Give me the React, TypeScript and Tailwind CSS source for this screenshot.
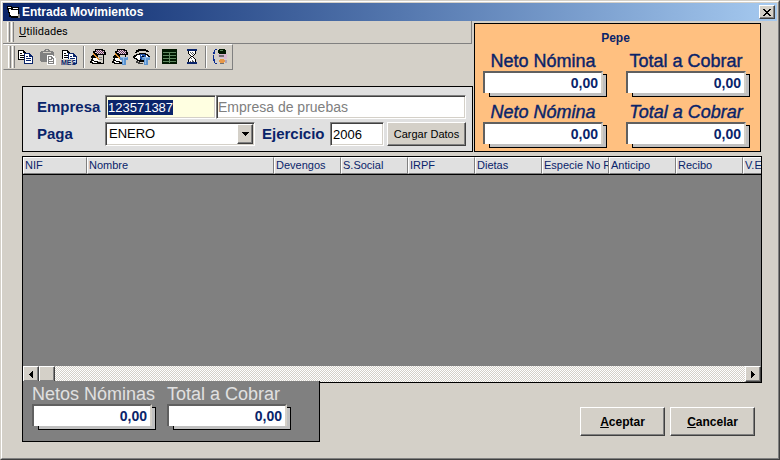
import React, { useEffect, useRef, useState } from 'react';

const raised =
  'bg-[#d4d0c8] border border-t-white border-l-white border-r-[#404040] border-b-[#404040] shadow-[inset_-1px_-1px_0_#808080]';
const sunken =
  'border border-t-[#808080] border-l-[#808080] border-r-white border-b-white shadow-[inset_1px_1px_0_#404040,inset_-1px_-1px_0_#d4d0c8]';

const columns = [
  { label: 'NIF', width: 'w-[64px]' },
  { label: 'Nombre', width: 'w-[187px]' },
  { label: 'Devengos', width: 'w-[67px]' },
  { label: 'S.Social', width: 'w-[67px]' },
  { label: 'IRPF', width: 'w-[67px]' },
  { label: 'Dietas', width: 'w-[67px]' },
  { label: 'Especie No R', width: 'w-[67px]' },
  { label: 'Anticipo', width: 'w-[67px]' },
  { label: 'Recibo', width: 'w-[67px]' },
  { label: 'V.E', width: 'w-[67px]' },
];

const Icon: React.FC<{ children: React.ReactNode }> = ({ children }) => (
  <svg width="18" height="16" viewBox="0 0 18 16" shapeRendering="crispEdges" aria-hidden="true">
    {children}
  </svg>
);

const Pages: React.FC = () => (
  <>
    <path fill="#000" d="M1 1h6v1h1v1h1v8H1z" />
    <path fill="#fff" d="M2 2h4v2h2v6H2z" />
    <path fill="#000" d="M3 4h2v1H3zM3 6h4v1H3zM3 8h4v1H3z" />
    <path fill="#0a246a" d="M7 4h6v1h1v1h1v1h1v8H7z" />
    <path fill="#fff" d="M8 5h4v3h3v6H8z" />
    <path fill="#0a246a" d="M9 7h2v1H9zM9 9h5v1H9zM9 11h5v1H9zM12 5h1v2h2v1h-3z" />
  </>
);

const CopyIcon = () => (
  <Icon>
    <Pages />
  </Icon>
);

const PasteIcon = () => (
  <Icon>
    <path fill="#808080" d="M6 0h4v1h1v1h3v1h1v10H2v-1H1V3h1V2h3V1h1z" />
    <path fill="#d4d0c8" d="M7 1h2v1H7zM4 3h8v1H4z" />
    <path fill="#fff" d="M8 6h6v1h2v2h1v7H8z" />
    <path fill="#808080" d="M9 7h4v1h1v1h1v6H9z" />
    <path fill="#fff" d="M10 8h2v2h2v4h-4z" />
    <path fill="#808080" d="M10 10h3v1h-3zM10 12h4v1h-4z" />
  </Icon>
);

const CopyMonthIcon = () => (
  <Icon>
    <Pages />
    <path fill="#d4d0c8" d="M0 10h12v6H0z" />
    <text x="0" y="16" fontSize="7" fontWeight="700" fill="#0a246a" fontFamily="Liberation Sans, sans-serif">
      MES
    </text>
  </Icon>
);

const Book: React.FC = () => (
  <>
    <path fill="#000" d="M6 0h8v1h2v2h1v3h-2v9H3v-1H1v-2h1v-2h1V9H2V7h1V6h2V5H4V2h2z" />
    <path fill="#e8c8dc" d="M7 1h6v1h2v3H8V4H6V3h1z" />
    <path
      fill="#604058"
      d="M8 1h1v1H8zM10 1h1v1h-1zM12 1h1v1h-1zM7 2h1v1H7zM9 2h1v1H9zM11 2h1v1h-1zM13 2h1v1h-1zM8 3h1v1H8zM10 3h1v1h-1zM12 3h1v1h-1zM14 3h1v1h-1zM9 4h1v1H9zM11 4h1v1h-1zM13 4h1v1h-1z"
    />
    <path fill="#d4d0c8" d="M9 6h5v8H9z" />
    <path fill="#808080" d="M10 8h3v1h-3zM10 10h3v1h-3z" />
    <path fill="#fff" d="M4 9h4v1h2v2H8v2H4v-1H3v-1h2v-1H4zM6 6h1v2H6z" />
    <path fill="#e09030" d="M4 4h1v1h1v1h1v1h1v1h1v1h1v2H9v-1H8V9H7V8H6V7H5V6H4z" />
    <path fill="#000" d="M5 12h3v1H5zM8 13h4v1H8z" />
  </>
);

const Filter: React.FC = () => (
  <>
    <path fill="#5c94d0" d="M9 8h8v3h-2v5h-4v-5H9z" />
    <path fill="#90bcec" d="M10 8h6v1h-6zM12 9h1v6h-1z" />
  </>
);

const BookIcon = () => (
  <Icon>
    <Book />
  </Icon>
);

const BookFilterIcon = () => (
  <Icon>
    <Book />
    <Filter />
  </Icon>
);

const EyeFilterIcon = () => (
  <Icon>
    <path fill="#000" d="M5 0h8v1h2v1h1v1h-3V2H6v1H4v1H2V3h1V1h2z" />
    <path fill="#000" d="M6 4h7v1h2v1h1v1h1v2h-2v2h-2v1h-2v1H6v-1H4v-1H3v-1H1V9H0V7h1V6h2V5h3z" />
    <path fill="#fff" d="M4 6h3v5H5v-1H4V9H2V8h1V7h1zM13 6h1v1h1v2h-1v1h-1z" />
    <path fill="#1c4ca0" d="M7 5h5v1h1v4h-1v1H8v-1H7z" />
    <path fill="#000" d="M9 7h2v2H9z" />
    <path fill="#fff" d="M8 6h1v1H8z" />
    <path fill="#404040" d="M3 12h2v1h2v1h3v1H5v-1H3z" />
    <Filter />
  </Icon>
);

const SheetIcon = () => (
  <Icon>
    <path fill="#001800" d="M1 0h15v15H1z" />
    <path fill="#608860" d="M2 3h13v1H2zM2 6h6v1H2zM9 6h6v1H9zM2 9h6v1H2zM9 9h6v1H9zM2 12h6v1H2zM9 12h6v1H9zM8 4h1v10H8z" />
  </Icon>
);

const HourglassIcon = () => (
  <Icon>
    <path fill="#0a246a" d="M4 0h10v2H4zM4 13h10v2H4z" />
    <path fill="#000" d="M5 2h8v3h-1v1h-1v1h-1v1h1v1h1v1h1v3H5v-3h1V9h1V8h1V7H7V6H6V5H5z" />
    <path fill="#fff" d="M6 2h6v3h-1v1h-1v1H8V6H7V5H6zM8 8h2v1h1v1h1v3H6v-3h1V9h1z" />
    <path fill="#606060" d="M7 3h1v1H7zM9 3h1v1H9zM8 4h1v1H8zM10 4h1v1h-1zM9 5h1v1H9zM8 9h1v1H8zM9 11h1v1H9zM7 12h1v1H7zM9 12h2v1H9z" />
  </Icon>
);

const OptionsIcon = () => (
  <Icon>
    <path fill="#0a2a90" d="M4 0h2v1H4zM3 1h1v2H3zM2 3h2v2H2zM2 6h1v4H2zM2 10h2v2H2zM3 12h1v2H3zM4 14h2v1H4z" />
    <path fill="#001800" d="M8 0h6v1h1v4H8V4H7V1h1z" />
    <path fill="#608860" d="M9 1h3v1H9z" />
    <path fill="#d8b8d0" d="M7 5h9v5h-3v-1H9V8H7z" />
    <path fill="#707070" d="M8 6h5v2H8zM9 14h4v1H9z" />
    <path fill="#e89848" d="M9 10h4v1h1v2h-1v1H9v-1H8v-2h1z" />
    <path fill="#b0a8b8" d="M14 11h2v3h-2z" />
  </Icon>
);

const ToolButton: React.FC<{ label: string; children: React.ReactNode }> = ({ label, children }) => (
  <button type="button" aria-label={label} className="flex h-[22px] w-[22px] items-center justify-center">
    {children}
  </button>
);

const Separator = () => <span className="mx-[2px] h-[22px] w-[2px] border-l border-l-[#808080] bg-white" />;

const Grip = () => (
  <span className="ml-[4px] flex gap-px self-stretch py-px">
    <span className="w-[3px] border-r border-l border-r-[#808080] border-l-white" />
    <span className="w-[3px] border-r border-l border-r-[#808080] border-l-white" />
  </span>
);

interface AmountProps {
  id: string;
  label: string;
  labelClass?: string;
}

const Amount: React.FC<AmountProps> = ({ id, label, labelClass = '' }) => (
  <div className="w-[120px]">
    <label htmlFor={id} className={`block text-[18px] leading-[20px] whitespace-nowrap ${labelClass}`}>
      {label}
    </label>
    <div className="relative h-[22px]">
      <span className="absolute top-[3px] -right-[4px] -bottom-[4px] left-[6px] border border-black bg-[#c0c0c0]" />
      <input
        id={id}
        readOnly
        defaultValue="0,00"
        className="relative block h-[22px] w-full border-t-2 border-r-2 border-l-2 border-t-[#606060] border-r-[#d4d0c8] border-l-[#606060] bg-white pr-[3px] pb-px text-right text-[14px] font-bold text-[#0a246a] outline-none"
      />
    </div>
  </div>
);

const App: React.FC = () => {
  const [paga, setPaga] = useState('ENERO');
  const empresaRef = useRef<HTMLInputElement>(null);

  useEffect(() => {
    empresaRef.current?.focus();
    empresaRef.current?.select();
  }, []);

  return (
    <div className="flex min-h-screen flex-col border border-t-[#d4d0c8] border-r-[#404040] border-b-[#404040] border-l-[#d4d0c8] bg-[#d4d0c8] font-['Liberation_Sans',Arial,sans-serif] text-[11px] text-black">
      <div className="flex flex-1 flex-col border border-t-white border-r-[#808080] border-b-[#808080] border-l-white p-px">
        {/* Title bar */}
        <header className="flex h-[18px] items-center bg-linear-to-r from-[#0a246a] to-[#a6caf0] pr-[2px] pl-[3px]">
          <svg width="14" height="14" viewBox="0 0 14 14" shapeRendering="crispEdges" aria-hidden="true">
            <path fill="#000" d="M1 1h5v1h7v8h1v3H5v-1H3V8H2V5H1z" />
            <path fill="#fff" d="M2 2h3v1H2zM7 3h5v1H7zM3 4h2v1h7v6H5v-1H4V7H3z" />
            <path fill="#808080" d="M12 9h2v4h-2z" />
          </svg>
          <h1 className="ml-[2px] flex-1 text-[12px] font-bold text-white">Entrada Movimientos</h1>
          <button type="button" aria-label="Cerrar" className={`flex h-[14px] w-[16px] items-center justify-center ${raised}`}>
            <svg width="8" height="7" viewBox="0 0 8 7" shapeRendering="crispEdges" aria-hidden="true">
              <path d="M0 0h2v1h1v1h2V1h1V0h2v1H7v1H6v1H5v1h1v1h1v1h1v1H6V6H5V5H3v1H2v1H0V6h1V5h1V4h1V3H2V2H1V1H0z" />
            </svg>
          </button>
        </header>

        <div className="flex">
          <div className="flex min-w-0 flex-1 flex-col">
            {/* Menu */}
            <nav className="mr-[2px] flex h-[23px] items-center border-r border-b border-[#808080]">
              <Grip />
              <button type="button" className="ml-[5px] font-['Roboto',sans-serif] text-[11px]">
                <u>U</u>tilidades
              </button>
            </nav>

            {/* Toolbar */}
            <div className="flex h-[26px] items-center self-start border border-t-white border-r-[#808080] border-b-[#808080] border-l-[#d4d0c8] pr-px">
              <Grip />
              <ToolButton label="Copiar">
                <CopyIcon />
              </ToolButton>
              <ToolButton label="Pegar">
                <PasteIcon />
              </ToolButton>
              <ToolButton label="Copiar mes">
                <CopyMonthIcon />
              </ToolButton>
              <Separator />
              <ToolButton label="Editar">
                <BookIcon />
              </ToolButton>
              <ToolButton label="Editar con filtro">
                <BookFilterIcon />
              </ToolButton>
              <ToolButton label="Ver con filtro">
                <EyeFilterIcon />
              </ToolButton>
              <Separator />
              <ToolButton label="Hoja">
                <SheetIcon />
              </ToolButton>
              <ToolButton label="Calcular">
                <HourglassIcon />
              </ToolButton>
              <Separator />
              <ToolButton label="Opciones">
                <OptionsIcon />
              </ToolButton>
            </div>

            {/* Company and pay period */}
            <section className="mt-4 mr-px ml-[19px] flex flex-col gap-[3px] border border-black bg-[#e0e0e0] pt-2 pr-[6px] pb-[5px]">
              <div className="flex h-6 items-center">
                <label htmlFor="empresa" className="w-[82px] pl-[14px] text-[15px] font-bold text-[#0a246a]">
                  Empresa
                </label>
                <input
                  id="empresa"
                  ref={empresaRef}
                  defaultValue="123571387"
                  className={`h-6 w-[111px] bg-[#ffffe1] px-[2px] text-[13px] outline-none selection:bg-[#0a246a] selection:text-white ${sunken}`}
                />
                <input
                  aria-label="Nombre de la empresa"
                  readOnly
                  defaultValue="Empresa de pruebas"
                  className={`h-6 min-w-0 flex-1 bg-white px-px text-[14px] text-[#808080] outline-none ${sunken}`}
                />
              </div>
              <div className="flex h-6 items-center">
                <label htmlFor="paga" className="w-[82px] pl-[14px] text-[15px] font-bold text-[#0a246a]">
                  Paga
                </label>
                <div className="relative min-w-0 flex-1">
                  <select
                    id="paga"
                    value={paga}
                    onChange={(e) => setPaga(e.target.value)}
                    className={`block h-6 w-full appearance-none bg-white px-[3px] text-[13px] outline-none ${sunken}`}
                  >
                    <option>ENERO</option>
                    <option>FEBRERO</option>
                    <option>MARZO</option>
                  </select>
                  <span
                    className={`pointer-events-none absolute top-[2px] right-[2px] bottom-[2px] flex w-4 items-center justify-center ${raised}`}
                  >
                    <svg width="7" height="4" viewBox="0 0 7 4" shapeRendering="crispEdges" aria-hidden="true">
                      <path d="M0 0h7v1H6v1H5v1H4v1H3V3H2V2H1V1H0z" />
                    </svg>
                  </span>
                </div>
                <label htmlFor="ejercicio" className="w-[75px] pl-[7px] text-[15px] font-bold text-[#0a246a]">
                  Ejercicio
                </label>
                <input
                  id="ejercicio"
                  defaultValue="2006"
                  className={`h-6 w-[54px] bg-white px-[2px] text-[13px] outline-none ${sunken}`}
                />
                <button type="button" className={`ml-[3px] h-6 w-[79px] text-[11px] ${raised}`}>
                  Cargar Datos
                </button>
              </div>
            </section>
          </div>

          {/* Employee totals */}
          <section className="mt-[2px] mr-4 w-[287px] border border-black bg-[#ffc080] pt-[6px] pb-[7px] pl-2 text-[#0a246a]">
            <h2 className="mr-3 text-center text-[12px] leading-4 font-bold">Pepe</h2>
            <div className="mt-[5px] grid grid-cols-[120px_120px] gap-x-[23px] gap-y-[9px]">
              <Amount id="neto" label="Neto Nómina" labelClass="text-center [-webkit-text-stroke:0.4px]" />
              <Amount id="total" label="Total a Cobrar" labelClass="text-center [-webkit-text-stroke:0.4px]" />
              <Amount
                id="neto-calculado"
                label="Neto Nómina"
                labelClass="text-center italic [-webkit-text-stroke:0.4px]"
              />
              <Amount
                id="total-calculado"
                label="Total a Cobrar"
                labelClass="text-center italic [-webkit-text-stroke:0.4px]"
              />
            </div>
          </section>
        </div>

        {/* Grid */}
        <div className="mt-1 mr-[15px] ml-[19px] flex flex-1 flex-col overflow-hidden border border-black bg-[#808080]">
          <div className="overflow-hidden">
            <table className="w-[787px] table-fixed border-collapse">
              <thead>
                <tr className="h-[17px] border-b border-b-black bg-[#e0e0e0] text-[#0a246a]">
                  {columns.map((col) => (
                    <th
                      key={col.label}
                      scope="col"
                      className={`overflow-hidden p-0 text-left font-normal whitespace-nowrap ${col.width}`}
                    >
                      <div className="h-[17px] overflow-hidden border border-t-white border-r-[#808080] border-b-[#808080] border-l-white pl-px leading-[15px]">
                        {col.label}
                      </div>
                    </th>
                  ))}
                </tr>
              </thead>
              <tbody />
            </table>
          </div>
          <div className="mt-auto flex h-4 bg-[repeating-conic-gradient(#ffffff_0_25%,#d4d0c8_0_50%)] bg-[length:2px_2px]">
            <button type="button" aria-label="Izquierda" className={`flex w-4 items-center justify-center ${raised}`}>
              <svg width="4" height="7" viewBox="0 0 4 7" shapeRendering="crispEdges" aria-hidden="true">
                <path d="M4 0v7H3V6H2V5H1V4H0V3h1V2h1V1h1V0z" />
              </svg>
            </button>
            <span className={`w-4 ${raised}`} />
            <button
              type="button"
              aria-label="Derecha"
              className={`ml-auto flex w-4 items-center justify-center ${raised}`}
            >
              <svg width="4" height="7" viewBox="0 0 4 7" shapeRendering="crispEdges" aria-hidden="true">
                <path d="M0 0v7h1V6h1V5h1V4h1V3H3V2H2V1H1V0z" />
              </svg>
            </button>
          </div>
        </div>

        {/* Totals and actions */}
        <footer className="mr-[22px] mb-[15px] ml-[19px] flex items-start justify-between">
          <section className="z-10 -mt-[2px] flex w-[298px] gap-[15px] border border-t-0 border-black bg-[#808080] pt-[3px] pb-[15px] pl-[9px] text-[#e0e0e0]">
            <Amount id="netos" label="Netos Nóminas" />
            <Amount id="total-netos" label="Total a Cobrar" />
          </section>
          <div className="mt-6 flex gap-[5px]">
            <button type="button" className={`h-[29px] w-[85px] text-[12px] font-bold ${raised}`}>
              <u>A</u>ceptar
            </button>
            <button type="button" className={`h-[29px] w-[85px] text-[12px] font-bold ${raised}`}>
              <u>C</u>ancelar
            </button>
          </div>
        </footer>
      </div>
    </div>
  );
};

export default App;
